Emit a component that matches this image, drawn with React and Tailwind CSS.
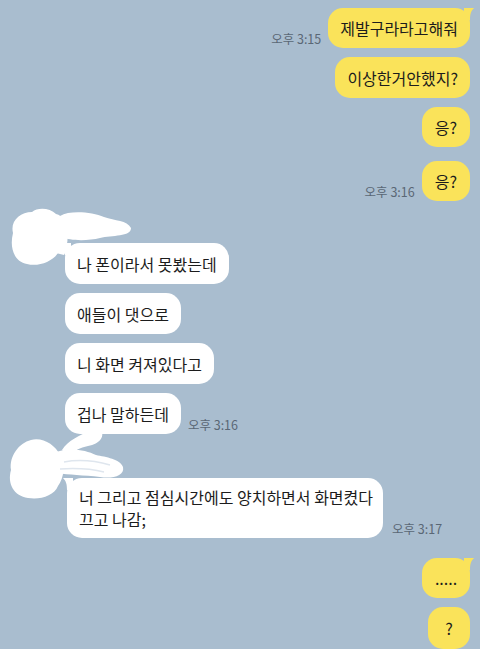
import React from "react";

const YELLOW = "#fae35a";

function TailRight() {
  return (
    <svg className="absolute right-[-4px] top-0" width="10" height="12" viewBox="0 0 10 12">
      <path d="M0 0 H10 C7 3 6 6 6 12 H0 Z" fill={YELLOW} />
    </svg>
  );
}

function TailLeft() {
  return (
    <svg className="absolute left-[-4px] top-0" width="10" height="12" viewBox="0 0 10 12">
      <path d="M10 0 H0 C3 3 4 6 4 12 H10 Z" fill="#ffffff" />
    </svg>
  );
}

function Mine({ text, time, tail, className = "", box = "h-[40px] px-[12px]" }) {
  return (
    <div className={`flex justify-end items-end gap-[7px] pr-[10px] ${className}`}>
      {time && <span className="text-[12.5px] leading-[14px] text-[#5a6775] mb-[2px]">{time}</span>}
      <div className={`relative ${box} flex items-center justify-center bg-[#fae35a] rounded-[15px] text-[16px] text-[#1c1c1c]`}>
        {tail && <TailRight />}
        {text}
      </div>
    </div>
  );
}

function Theirs({ children, time, tail, className = "", box = "h-[41px] flex items-center" }) {
  return (
    <div className={`flex items-end gap-[7px] ${className}`}>
      <div className={`relative ${box} bg-white rounded-[15px] px-[12px] text-[16px] text-[#1c1c1c]`}>
        {tail && <TailLeft />}
        {children}
      </div>
      {time && <span className="text-[12.5px] leading-[14px] text-[#5a6775] mb-[2px]">{time}</span>}
    </div>
  );
}

// scribbled-out profile picture + name
function Scribble1() {
  return (
    <svg className="absolute left-0 top-0" width="140" height="70" viewBox="0 0 140 70">
      <g fill="#ffffff">
        <path d="M13 32 C10 20 20 11 32 11 C38 6 50 7 56 13 C64 15 69 24 67 33 C69 43 65 50 58 52 C52 61 38 66 27 63 C15 61 9 48 13 32 Z" />
        <path d="M60 15 C70 9 92 11 104 16 C115 20 127 19 131 27 C131 36 112 34 100 37 C88 40 70 40 62 36 C57 30 56 20 60 15 Z" />
        <path d="M62 36 C66 40 68 48 64 54 L56 52 Z" />
      </g>
    </svg>
  );
}

function Scribble2() {
  return (
    <svg className="absolute left-0 top-[-6px]" width="140" height="80" viewBox="0 0 140 80">
      <g fill="#ffffff">
        <path d="M100 0 C106 8 100 16 88 18 C80 20 74 22 70 28 L62 22 C68 12 80 8 90 2 Z" />
        <path d="M11 42 C9 28 19 15 31 12 C43 9 55 17 60 27 C66 36 64 50 58 58 C54 68 40 72 28 70 C14 68 7 56 11 42 Z" />
        <path d="M56 24 C70 19 86 22 96 27 C106 29 120 31 123 39 C125 48 112 51 100 49 C84 47 68 47 58 45 Z" />
      </g>
      <path d="M64 34 C80 31 96 33 110 37" stroke="#dfe6ee" strokeWidth="1.5" fill="none" />
      <path d="M60 41 C76 40 92 41 104 44" stroke="#dfe6ee" strokeWidth="1.5" fill="none" />
    </svg>
  );
}

export default function App() {
  return (
    <div className="w-[480px] h-[649px] overflow-hidden bg-[#a9bdcf] font-['Noto_Sans_CJK_KR','Noto_Sans',sans-serif] pt-[8px] flex flex-col">
      <Mine text="제발구라라고해줘" time="오후 3:15" tail />
      <Mine text="이상한거안했지?" className="mt-[9px]" box="h-[41px] px-[12px]" />
      <Mine text="응?" className="mt-[9px]" box="h-[40px] px-[13px]" />
      <Mine text="응?" time="오후 3:16" className="mt-[14px]" box="h-[40px] px-[13px]" />

      <div className="relative pl-[65px] pt-[42px]">
        <Scribble1 />
        <div className="flex flex-col gap-[9px]">
          <Theirs tail>나 폰이라서 못봤는데</Theirs>
          <Theirs>애들이 댓으로</Theirs>
          <Theirs>니 화면 켜져있다고</Theirs>
          <Theirs time="오후 3:16">겁나 말하든데</Theirs>
        </div>
      </div>

      <div className="relative pl-[67px] pt-[44px]">
        <Scribble2 />
        <Theirs tail time="오후 3:17" className="gap-[9px]" box="w-[316px] py-[8px] leading-[22px] whitespace-nowrap">
          너 그리고 점심시간에도 양치하면서 화면켰다
          <br />
          끄고 나감;
        </Theirs>
      </div>

      <Mine text="....." tail className="mt-[20px]" box="h-[40px] w-[48px]" />
      <Mine text="?" className="mt-[9px]" box="h-[42px] w-[42px]" />
    </div>
  );
}
